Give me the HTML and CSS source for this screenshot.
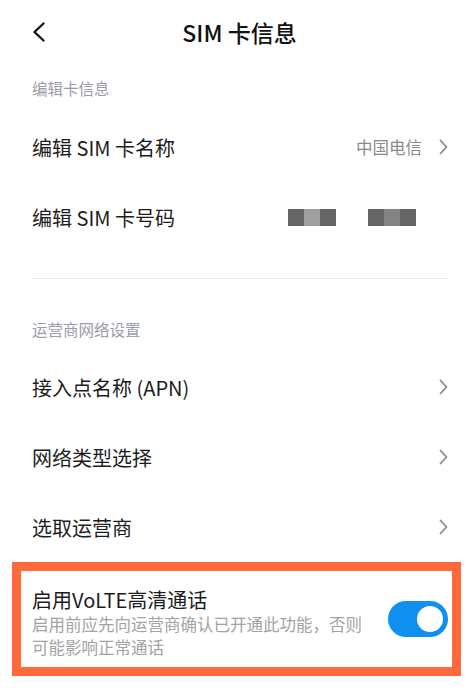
FILE: index.html
```html
<!DOCTYPE html>
<html lang="zh-CN">
<head>
<meta charset="utf-8">
<link rel="stylesheet" href="styles.css">
</head>
<body>
<div class="page">
  <header class="topbar">
    <svg class="back" width="14" height="20" viewBox="0 0 14 20"><path d="M11.5 1.5 L2.5 10 L11.5 18.5" fill="none" stroke="#111" stroke-width="2.4" stroke-linecap="round" stroke-linejoin="round"/></svg>
    <h1 class="title">SIM 卡信息</h1>
  </header>

  <div class="section-title first">编辑卡信息</div>
  <div class="row">
    <span class="label">编辑 SIM 卡名称</span>
    <span class="value">中国电信</span>
    <svg class="chev" width="9" height="16" viewBox="0 0 9 16"><path d="M1.5 1.5 L7.5 8 L1.5 14.5" fill="none" stroke="#8a8a8a" stroke-width="1.8" stroke-linecap="round" stroke-linejoin="round"/></svg>
  </div>
  <div class="row">
    <span class="label">编辑 SIM 卡号码</span>
    <span class="masked">
      <span class="mblock"><i class="m1"></i><i class="m2"></i><i class="m1"></i></span>
      <span class="mblock"><i class="m1"></i><i class="m3"></i><i class="m1"></i></span>
    </span>
  </div>
  <div class="divider"></div>

  <div class="section-title second">运营商网络设置</div>
  <div class="row">
    <span class="label">接入点名称 (APN)</span>
    <svg class="chev" width="9" height="16" viewBox="0 0 9 16"><path d="M1.5 1.5 L7.5 8 L1.5 14.5" fill="none" stroke="#8a8a8a" stroke-width="1.8" stroke-linecap="round" stroke-linejoin="round"/></svg>
  </div>
  <div class="row">
    <span class="label">网络类型选择</span>
    <svg class="chev" width="9" height="16" viewBox="0 0 9 16"><path d="M1.5 1.5 L7.5 8 L1.5 14.5" fill="none" stroke="#8a8a8a" stroke-width="1.8" stroke-linecap="round" stroke-linejoin="round"/></svg>
  </div>
  <div class="row">
    <span class="label">选取运营商</span>
    <svg class="chev" width="9" height="16" viewBox="0 0 9 16"><path d="M1.5 1.5 L7.5 8 L1.5 14.5" fill="none" stroke="#8a8a8a" stroke-width="1.8" stroke-linecap="round" stroke-linejoin="round"/></svg>
  </div>

  <div class="highlight">
    <div class="volte">
      <div class="volte-text">
        <div class="volte-title">启用VoLTE高清通话</div>
        <div class="volte-sub">启用前应先向运营商确认已开通此功能，否则可能影响正常通话</div>
      </div>
      <div class="toggle"><div class="knob"></div></div>
    </div>
  </div>
</div>
</body>
</html>
```

FILE: styles.css
```css
* { box-sizing: border-box; }
html, body { margin: 0; padding: 0; background: #fff; }
body {
  font-family: "Noto Sans CJK SC", "Noto Sans", sans-serif;
  color: #1c1c1c;
}
.page { width: 469px; }

.topbar {
  height: 64px;
  display: flex;
  align-items: center;
  justify-content: center;
  position: relative;
}
.back {
  position: absolute;
  left: 32px;
  top: 22px;
}
.title {
  margin: 0;
  font-size: 23px;
  font-weight: 500;
  color: #111;
  padding-left: 10px;
}

.section-title {
  display: flex;
  align-items: center;
  padding-left: 32px;
  font-size: 15.5px;
  color: #9a9cab;
}
.section-title.first { height: 48px; }
.section-title.second { height: 46px; margin-top: 27px; }

.row {
  height: 70px;
  display: flex;
  align-items: center;
  padding: 0 21px 0 32px;
}
.label {
  flex: 1;
  font-size: 20px;
  color: #1c1c1c;
}
.value {
  font-size: 16.5px;
  color: #8a8a8a;
  margin-right: 17px;
}
.chev { display: block; }

.masked {
  display: flex;
  gap: 32px;
  margin-right: 32px;
}
.mblock { display: flex; }
.mblock i { display: block; width: 16px; height: 17px; }
.m1 { background: #666; }
.m2 { background: #9f9f9f; }
.m3 { background: #848484; }

.divider {
  height: 1px;
  background: #e8e8e8;
  margin: 26px 21px 0 32px;
}

.highlight {
  margin: 0 8px 0 12px;
  border: 9px solid #ff6a3c;
}
.volte {
  display: flex;
  align-items: center;
  padding: 15px 4px 8px 11px;
  gap: 20px;
}
.volte-text { flex: 1; }
.volte-title {
  font-size: 20px;
  line-height: 27px;
  color: #1c1c1c;
}
.volte-sub {
  font-size: 16.5px;
  line-height: 23px;
  color: #a3a3a3;
}
.toggle {
  width: 60px;
  height: 36px;
  border-radius: 18px;
  background: #0f8ff0;
  display: flex;
  align-items: center;
  justify-content: flex-end;
  padding-right: 5px;
  margin-bottom: 7px;
}
.knob {
  width: 26px;
  height: 26px;
  border-radius: 50%;
  background: #fff;
}
```
